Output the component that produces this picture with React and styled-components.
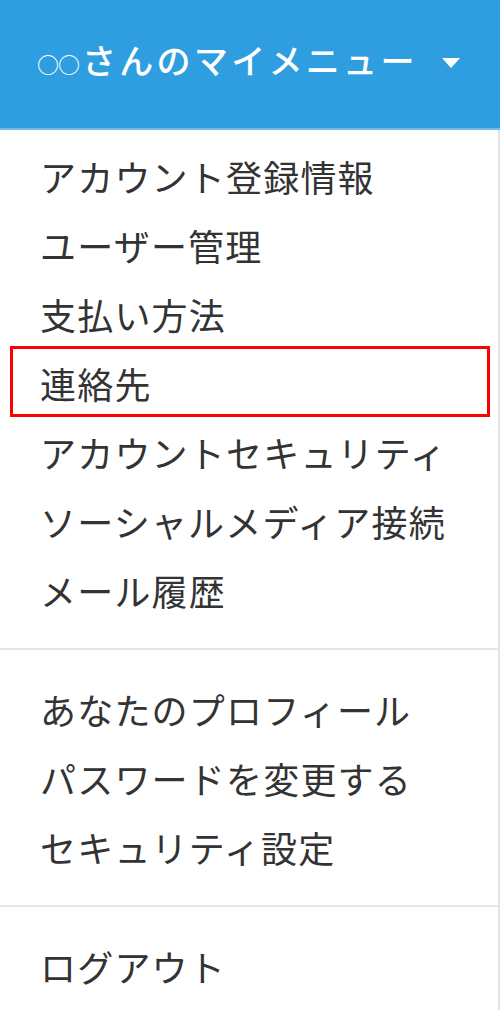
import React from 'react';
import styled, { createGlobalStyle } from 'styled-components';

const GlobalStyle = createGlobalStyle`
  html, body {
    margin: 0;
    padding: 0;
    background: #fff;
  }
  body {
    font-family: "Noto Sans CJK JP", "Noto Sans", sans-serif;
  }
`;

const Menu = styled.nav`
  width: 500px;
  height: 1010px;
  display: flex;
  flex-direction: column;
  background: #fff;
`;

const Header = styled.div`
  height: 130px;
  flex-shrink: 0;
  display: flex;
  align-items: center;
  gap: 24px;
  padding: 0 0 8px 37px;
  box-sizing: border-box;
  background: #2e9ee0;
  border-bottom: 2px solid #6fbbea;
  color: #fff;
`;

const Title = styled.span`
  font-size: 34px;
  font-weight: 500;
  letter-spacing: 3.3px;
  line-height: 1;
`;

const Circles = styled.span`
  font-size: 22px;
  letter-spacing: -1px;
  margin-right: 3px;
  vertical-align: 1px;
`;

const Caret = styled.span`
  width: 0;
  height: 0;
  margin-top: 6px;
  border-left: 9px solid transparent;
  border-right: 9px solid transparent;
  border-top: 10px solid #fff;
`;

const Body = styled.div`
  flex: 1;
  display: flex;
  flex-direction: column;
  border-right: 2px solid #e4e4e4;
`;

const Group = styled.ul`
  list-style: none;
  margin: 0;
  padding: ${p => (p.$first ? '11px 0 0' : '0')};
`;

const Item = styled.li`
  position: relative;
  height: 69px;
  display: flex;
  align-items: center;
  padding-left: 40px;
  font-size: 36px;
  letter-spacing: 1.2px;
  color: #333;
  line-height: 1;

  ${p => p.$marked && `
    &::after {
      content: '';
      position: absolute;
      left: 10px;
      width: 480px;
      top: -2px;
      bottom: 0;
      border: 3px solid #f00;
      box-sizing: border-box;
    }
  `}
`;

const Divider = styled.hr`
  margin: 24px 0;
  border: 0;
  height: 2px;
  background: #e6e6e6;
`;

const groups = [
  [
    'アカウント登録情報',
    'ユーザー管理',
    '支払い方法',
    '連絡先',
    'アカウントセキュリティ',
    'ソーシャルメディア接続',
    'メール履歴',
  ],
  ['あなたのプロフィール', 'パスワードを変更する', 'セキュリティ設定'],
  ['ログアウト'],
];

const App = () => (
  <>
    <GlobalStyle />
    <Menu>
      <Header>
        <Title>
          <Circles>○○</Circles>さんのマイメニュー
        </Title>
        <Caret />
      </Header>
      <Body>
        {groups.map((items, gi) => (
          <React.Fragment key={gi}>
            {gi > 0 && <Divider />}
            <Group $first={gi === 0}>
              {items.map(label => (
                <Item key={label} $marked={label === '連絡先'}>
                  {label}
                </Item>
              ))}
            </Group>
          </React.Fragment>
        ))}
      </Body>
    </Menu>
  </>
);

export default App;
